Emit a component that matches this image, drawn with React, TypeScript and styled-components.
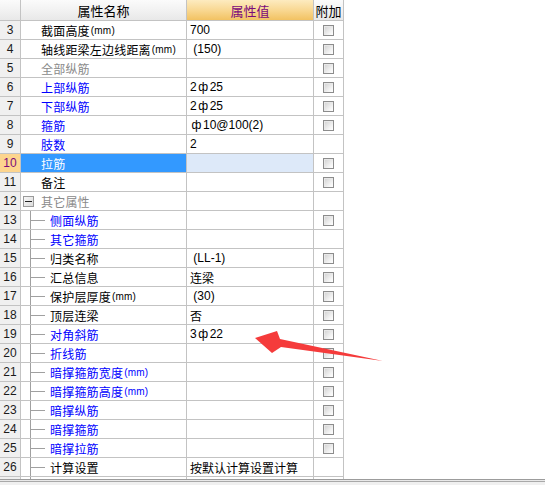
import styled, { createGlobalStyle } from "styled-components"

const GlobalStyle = createGlobalStyle`
    html, body {
        margin: 0;
        padding: 0;
        background: #ffffff;
    }
    body {
        font-family: "Liberation Sans", "Noto Sans CJK SC", sans-serif;
        font-size: 12px;
    }
`

const LINE = "#c3c3c3"
const TREE = "#a0a0a0"

type Tone = "black" | "gray" | "blue"

type Row = {
    n: number
    name: string
    tone: Tone
    value?: string
    kind?: "top" | "group" | "child"
    check?: boolean
    selected?: boolean
}

const rows: Row[] = [
    { n: 3, name: "截面高度(mm)", tone: "black", value: "700", check: true },
    { n: 4, name: "轴线距梁左边线距离(mm)", tone: "black", value: " (150)", check: true },
    { n: 5, name: "全部纵筋", tone: "gray", check: true },
    { n: 6, name: "上部纵筋", tone: "blue", value: "2ф25", check: true },
    { n: 7, name: "下部纵筋", tone: "blue", value: "2ф25", check: true },
    { n: 8, name: "箍筋", tone: "blue", value: "ф10@100(2)", check: true },
    { n: 9, name: "肢数", tone: "blue", value: "2" },
    { n: 10, name: "拉筋", tone: "blue", check: true, selected: true },
    { n: 11, name: "备注", tone: "black", check: true },
    { n: 12, name: "其它属性", tone: "gray", kind: "group" },
    { n: 13, name: "侧面纵筋", tone: "blue", kind: "child", check: true },
    { n: 14, name: "其它箍筋", tone: "blue", kind: "child" },
    { n: 15, name: "归类名称", tone: "black", kind: "child", value: " (LL-1)", check: true },
    { n: 16, name: "汇总信息", tone: "black", kind: "child", value: "连梁", check: true },
    { n: 17, name: "保护层厚度(mm)", tone: "black", kind: "child", value: " (30)", check: true },
    { n: 18, name: "顶层连梁", tone: "black", kind: "child", value: "否", check: true },
    { n: 19, name: "对角斜筋", tone: "blue", kind: "child", value: "3ф22", check: true },
    { n: 20, name: "折线筋", tone: "blue", kind: "child", check: true },
    { n: 21, name: "暗撑箍筋宽度(mm)", tone: "blue", kind: "child", check: true },
    { n: 22, name: "暗撑箍筋高度(mm)", tone: "blue", kind: "child", check: true },
    { n: 23, name: "暗撑纵筋", tone: "blue", kind: "child", check: true },
    { n: 24, name: "暗撑箍筋", tone: "blue", kind: "child", check: true },
    { n: 25, name: "暗撑拉筋", tone: "blue", kind: "child", check: true },
    { n: 26, name: "计算设置", tone: "black", kind: "child", value: "按默认计算设置计算" },
]

const toneColor = { black: "#000000", gray: "#8a8a8a", blue: "#0000ff" }

const Page = styled.div`
    position: relative;
    width: 545px;
    height: 485px;
    overflow: hidden;
    display: flex;
    flex-direction: column;
`

const Sheet = styled.div`
    height: 479px;
    overflow: hidden;
    width: 344px;
`

const GridRow = styled.div<{ $head?: boolean }>`
    display: grid;
    grid-template-columns: 21px 166px 127px 30px;
    height: ${p => (p.$head ? "21px" : "19px")};
    box-sizing: border-box;
    border-bottom: 1px solid ${LINE};
`

const Cell = styled.div`
    box-sizing: border-box;
    border-right: 1px solid ${LINE};
    display: flex;
    align-items: center;
    white-space: nowrap;
    overflow: hidden;
`

const HeadCell = styled(Cell)<{ $accent?: boolean }>`
    justify-content: center;
    background: ${p =>
        p.$accent
            ? "linear-gradient(#fdebc0, #f8d68e 55%, #f2c262)"
            : "linear-gradient(#fbfbfb, #f1f1f1 55%, #e8e8e8)"};
    color: ${p => (p.$accent ? "#7b0a7b" : "#000")};
    font-size: 13px;
`

const NumCell = styled(Cell)<{ $active?: boolean }>`
    justify-content: center;
    background: ${p => (p.$active ? "#fdd58e" : "#f0f0f0")};
    color: ${p => (p.$active ? "#7b0a7b" : "#1a1a1a")};
    font-size: 12px;
`

const NameCell = styled(Cell)<{ $kind: "top" | "group" | "child"; $selected?: boolean; $tone: Tone }>`
    padding-left: ${p => (p.$kind === "top" ? "20px" : p.$kind === "group" ? "2px" : "9px")};
    background: ${p => (p.$selected ? "#3399ff" : "#fff")};
    color: ${p => (p.$selected ? "#fff" : toneColor[p.$tone])};
    align-items: ${p => (p.$kind === "child" ? "stretch" : "center")};
`

const Branch = styled.span`
    width: 20px;
    flex: none;
    background:
        linear-gradient(${TREE}, ${TREE}) 0 0 / 1px 100% no-repeat,
        linear-gradient(${TREE}, ${TREE}) 1px 50% / 14px 1px no-repeat;
`

const Label = styled.span`
    display: flex;
    align-items: center;
    letter-spacing: 0.2px;
`

const Unit = styled.span`
    font-size: 10px;
    margin-left: 1px;
`

const Expander = styled.span`
    width: 11px;
    height: 11px;
    flex: none;
    box-sizing: border-box;
    border: 1px solid #9a9a9a;
    background: linear-gradient(135deg, #f8f8f8, #dcdcdc);
    display: flex;
    align-items: center;
    justify-content: center;
    margin-right: 7px;
    &::after {
        content: "";
        width: 7px;
        height: 1px;
        background: #222;
    }
`

const ValueCell = styled(Cell)<{ $selected?: boolean }>`
    padding-left: 3px;
    background: ${p => (p.$selected ? "#dde9f9" : "#fff")};
    color: #000;
    white-space: pre;
`

const Steel = styled.span`
    display: inline-block;
    width: 13px;
    text-align: center;
`

const CheckCell = styled(Cell)`
    justify-content: center;
`

const Box = styled.span`
    width: 11px;
    height: 11px;
    box-sizing: border-box;
    border: 1px solid #8c8c8c;
    background: linear-gradient(135deg, #cfcfcf, #f4f4f4 70%, #ffffff);
    box-shadow: inset 1px 1px 0 #e8e8e8;
`

const Footer = styled.div`
    flex: 1;
    border-top: 1px solid #9c9c9c;
    background: linear-gradient(#e9e9e9 0 1px, #a9a9a9 1px 2px, #f0f0f0 2px);
`

const Arrow = styled.svg`
    position: absolute;
    left: 0;
    top: 0;
    pointer-events: none;
`

const splitUnit = (name: string) => {
    const i = name.indexOf("(mm)")
    return i < 0 ? [name, ""] : [name.slice(0, i), "(mm)"]
}

const ValueText = ({ text }: { text: string }) => (
    <>
        {text.split(/(ф)/).map((part, i) =>
            part === "ф" ? <Steel key={i}>ф</Steel> : part
        )}
    </>
)

const NameContent = ({ row }: { row: Row }) => {
    const [text, unit] = splitUnit(row.name)
    const kind = row.kind ?? "top"
    return (
        <NameCell $kind={kind} $selected={row.selected} $tone={row.tone}>
            {kind === "group" && <Expander />}
            {kind === "child" && <Branch />}
            <Label>
                {text}
                {unit && <Unit>{unit}</Unit>}
            </Label>
        </NameCell>
    )
}

export default function App() {
    return (
        <Page>
            <GlobalStyle />
            <Sheet>
                <GridRow $head>
                    <HeadCell />
                    <HeadCell>属性名称</HeadCell>
                    <HeadCell $accent>属性值</HeadCell>
                    <HeadCell>附加</HeadCell>
                </GridRow>

                {rows.map(row => (
                    <GridRow key={row.n}>
                        <NumCell $active={row.selected}>{row.n}</NumCell>
                        <NameContent row={row} />
                        <ValueCell $selected={row.selected}>
                            <ValueText text={row.value ?? ""} />
                        </ValueCell>
                        <CheckCell>{row.check && <Box />}</CheckCell>
                    </GridRow>
                ))}

                <GridRow>
                    <NumCell />
                    <NameCell $kind="child" $tone="black">
                        <Branch />
                    </NameCell>
                    <ValueCell />
                    <CheckCell />
                </GridRow>
            </Sheet>
            <Footer />

            <Arrow width="545" height="485" viewBox="0 0 545 485">
                <polygon
                    points="255,338 277,331 280,339 383,361 281,347 272,353"
                    fill="#f53b3b"
                />
            </Arrow>
        </Page>
    )
}
